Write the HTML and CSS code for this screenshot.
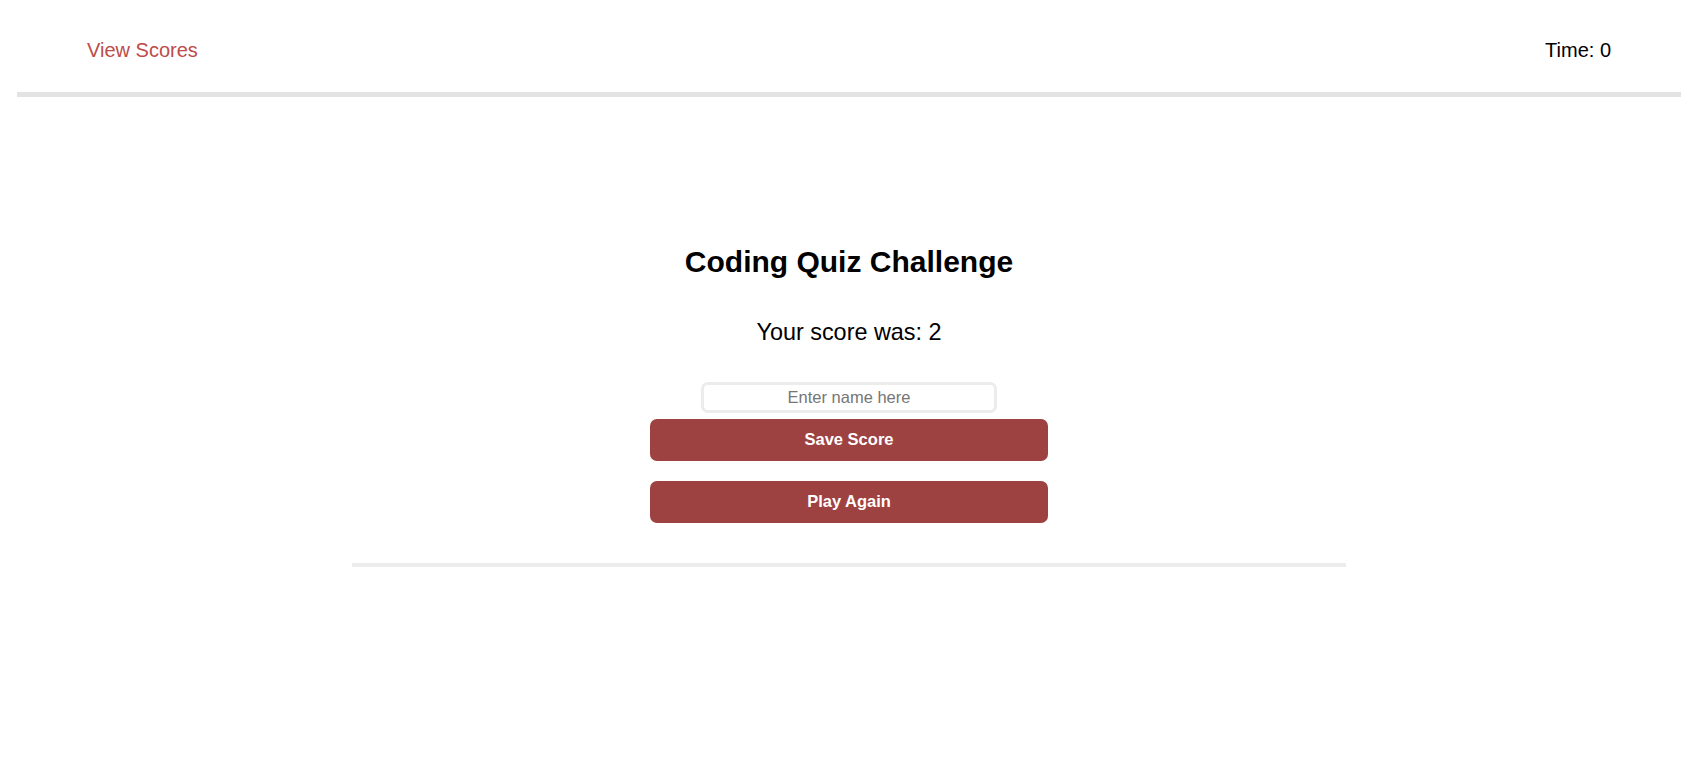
FILE: index.html
```html
<!DOCTYPE html>
<html lang="en">
<head>
<meta charset="utf-8">
<title>Coding Quiz Challenge</title>
<link rel="stylesheet" href="styles.css">
</head>
<body>
<header class="topbar">
  <a class="view-scores" href="#">View Scores</a>
  <span class="timer">Time: 0</span>
</header>
<main class="quiz">
  <h1 class="title">Coding Quiz Challenge</h1>
  <p class="score">Your score was: 2</p>
  <input class="name-input" type="text" placeholder="Enter name here">
  <button class="btn btn-save">Save Score</button>
  <button class="btn btn-play">Play Again</button>
  <div class="divider"></div>
</main>
</body>
</html>
```

FILE: styles.css
```css
html, body {
  margin: 0;
  padding: 0;
  background: #ffffff;
  font-family: "Liberation Sans", Arial, sans-serif;
  color: #000000;
}

.topbar {
  margin: 0 17px;
  padding: 39px 70px 30px 70px;
  height: 23px;
  display: flex;
  justify-content: space-between;
  align-items: center;
  border-bottom: 5px solid #e3e3e3;
  font-size: 20px;
  line-height: 23px;
}

.view-scores {
  color: #bc4c49;
  text-decoration: none;
}

.timer {
  color: #000000;
}

.quiz {
  display: flex;
  flex-direction: column;
  align-items: center;
}

.title {
  margin: 147px 0 0 0;
  font-size: 30px;
  font-weight: bold;
  line-height: 35px;
}

.score {
  margin: 40px 0 0 0;
  font-size: 23.4px;
  line-height: 26px;
}

.name-input {
  box-sizing: border-box;
  margin: 37px 0 0 0;
  width: 296px;
  height: 31px;
  border: 3px solid #ececec;
  border-radius: 7px;
  font-family: "Liberation Sans", Arial, sans-serif;
  font-size: 16.5px;
  text-align: center;
  outline: none;
  padding: 0 8px;
}

.name-input::placeholder {
  color: #767676;
}

.btn {
  box-sizing: border-box;
  width: 398px;
  height: 42px;
  border: none;
  border-radius: 7px;
  background: #9e4141;
  color: #ffffff;
  font-family: "Liberation Sans", Arial, sans-serif;
  font-size: 16.5px;
  font-weight: bold;
  line-height: 40px;
  padding: 0 0 2px 0;
  cursor: pointer;
}

.btn-save {
  margin-top: 6px;
}

.btn-play {
  margin-top: 20px;
}

.divider {
  margin-top: 40px;
  width: 994px;
  height: 4px;
  background: #ececec;
}
```
